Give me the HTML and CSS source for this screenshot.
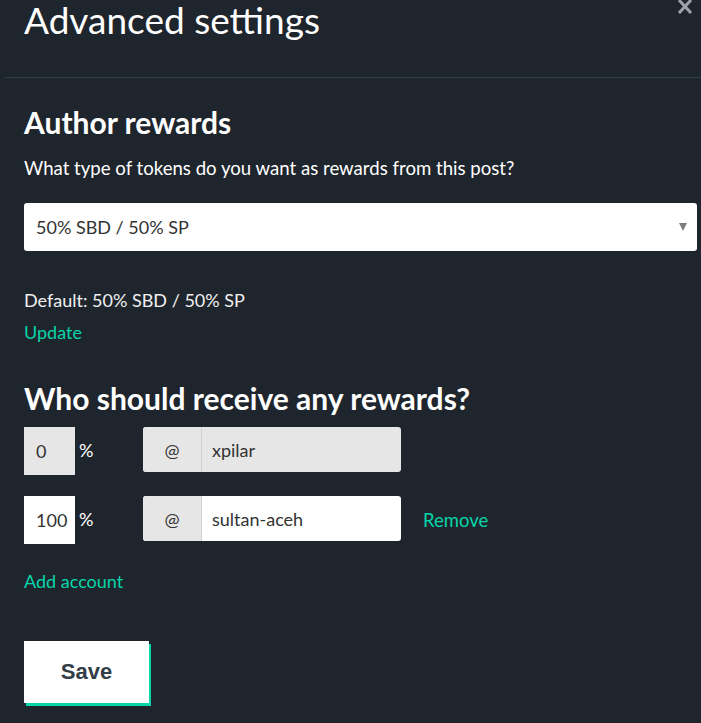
FILE: index.html
```html
<!DOCTYPE html>
<html>
<head>
<meta charset="utf-8">
<link rel="stylesheet" href="styles.css">
</head>
<body>
<div class="modal">
  <div class="header">
    <h1 class="title">Advanced settings</h1>
    <button class="close" aria-label="Close">
      <svg width="16" height="14" viewBox="0 0 16 14"><path d="M2 0 L14 13 M14 0 L2 13" stroke="#9ca3a9" stroke-width="3"/></svg>
    </button>
  </div>
  <div class="body">
    <h2 class="h2 h2-first">Author rewards</h2>
    <p class="question">What type of tokens do you want as rewards from this post?</p>
    <div class="select">
      <span>50% SBD / 50% SP</span>
      <span class="arrow"></span>
    </div>
    <p class="default">Default: 50% SBD / 50% SP</p>
    <a class="link update">Update</a>

    <h2 class="h2 h2-second">Who should receive any rewards?</h2>
    <div class="row">
      <div class="pct disabled">0</div>
      <span class="pct-sign">%</span>
      <div class="account disabled">
        <span class="at">@</span>
        <span class="name">xpilar</span>
      </div>
    </div>
    <div class="row">
      <div class="pct">100</div>
      <span class="pct-sign">%</span>
      <div class="account">
        <span class="at">@</span>
        <span class="name">sultan-aceh</span>
      </div>
      <a class="link remove">Remove</a>
    </div>
    <a class="link add">Add account</a>
    <div class="save-wrap">
      <button class="save">Save</button>
    </div>
  </div>
</div>
</body>
</html>
```

FILE: styles.css
```css
html, body {
  margin: 0;
  padding: 0;
  background: #1f252d;
  height: 100%;
  overflow: hidden;
}
body {
  font-family: Lato, "Noto Sans", sans-serif;
  color: #fff;
}
.modal {
  margin-left: 5px;
}
.header {
  position: relative;
  height: 77px;
  border-bottom: 1px solid #2e3e48;
  padding-left: 19px;
}
.title {
  margin: 0;
  font-weight: 400;
  font-size: 37px;
  line-height: 40px;
  color: #fff;
}
.close {
  position: absolute;
  right: 8px;
  top: 0;
  background: none;
  border: 0;
  padding: 0;
  line-height: 0;
}
.body {
  padding: 0 4px 0 19px;
}
.h2 {
  margin: 0;
  font-weight: 700;
  font-size: 30px;
  line-height: 34px;
}
.h2-first { padding-top: 27px; }
.question {
  margin: 18px 0 0;
  font-size: 18.6px;
  line-height: 22px;
}
.select {
  margin-top: 24px;
  height: 48px;
  background: #fff;
  border-radius: 3px;
  display: flex;
  align-items: center;
  justify-content: space-between;
  padding: 0 10px 0 12px;
  color: #333;
  font-size: 18px;
}
.arrow {
  width: 0;
  height: 0;
  border-left: 4px solid transparent;
  border-right: 4px solid transparent;
  border-top: 8px solid #7d7d7d;
}
.default {
  margin: 38px 0 0;
  font-size: 18px;
  line-height: 22px;
  color: #f0f0f0;
}
.link {
  display: block;
  color: #06d6a9;
  font-size: 18px;
  line-height: 22px;
}
.update { margin-top: 10px; }
.h2-second { margin-top: 38px; }
.row {
  display: flex;
  align-items: flex-start;
  margin-top: 12px;
}
.row + .row { margin-top: 21px; }
.pct {
  width: 51px;
  height: 48px;
  background: #fff;
  color: #333;
  font-size: 18px;
  display: flex;
  align-items: center;
  padding-left: 12px;
  box-sizing: border-box;
}
.pct.disabled {
  background: #e6e6e6;
}
.pct-sign {
  box-sizing: border-box;
  width: 68px;
  padding-left: 4px;
  font-size: 18px;
  line-height: 22px;
  margin-top: 12px;
  color: #fff;
}
.account {
  display: flex;
  width: 258px;
  height: 45px;
  border-radius: 3px;
  overflow: hidden;
  background: #fff;
  color: #333;
  font-size: 18px;
}
.account.disabled { background: #e6e6e6; }
.at {
  width: 58px;
  background: #e6e6e6;
  border-right: 1px solid #cfcfcf;
  display: flex;
  align-items: center;
  justify-content: center;
}
.name {
  display: flex;
  align-items: center;
  padding-left: 10px;
}
.remove {
  margin-left: 22px;
  align-self: center;
  font-size: 18.5px;
}
.add { margin-top: 26px; }
.save-wrap { margin-top: 49px; }
.save {
  width: 125px;
  height: 62px;
  background: #fff;
  border: 0;
  box-shadow: 2px 3px 0 #06d6a9;
  font-family: "Liberation Sans", Arial, sans-serif;
  font-weight: 700;
  font-size: 22px;
  color: #333d47;
}
```
